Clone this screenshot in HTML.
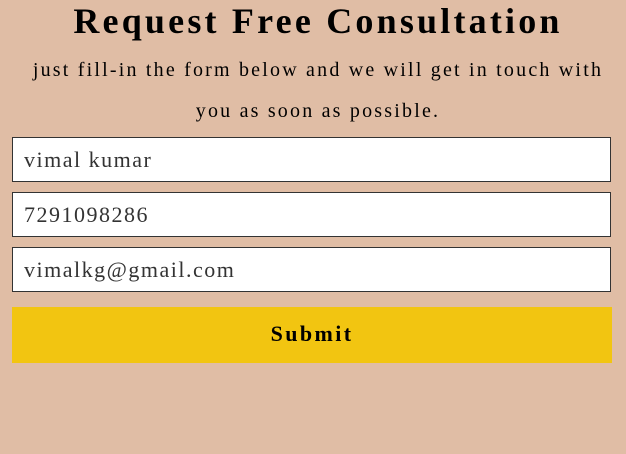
<!DOCTYPE html>
<html><head><meta charset="utf-8"><style>
body{margin:0;width:626px;height:454px;background:#e0bda5;font-family:"Liberation Serif",serif;color:#000;position:relative;overflow:hidden}
h1{position:absolute;top:0;left:5px;width:626px;margin:0;text-align:center;font-size:36px;font-weight:bold;line-height:42px;letter-spacing:3.2px}
.p{position:absolute;left:0;width:636px;text-align:center;font-size:20px;line-height:20px;letter-spacing:2.2px}
.in{position:absolute;left:12px;width:586px;height:43px;border:1px solid #333;background:#fff;font-family:"Liberation Serif",serif;font-size:22px;line-height:43px;padding-left:11px;color:#333;letter-spacing:1.5px;box-sizing:content-box}
.btn{position:absolute;left:12px;top:307px;width:600px;height:56px;background:#f2c511;text-align:center;font-size:22px;font-weight:bold;line-height:54px;letter-spacing:2.4px}
</style></head><body>
<h1>Request Free Consultation</h1>
<div class="p" style="top:60px">just fill-in the form below and we will get in touch with</div>
<div class="p" style="top:101px">you as soon as possible.</div>
<div class="in" style="top:137px">vimal kumar</div>
<div class="in" style="top:192px">7291098286</div>
<div class="in" style="top:247px">vimalkg@gmail.com</div>
<div class="btn">Submit</div>
</body></html>
